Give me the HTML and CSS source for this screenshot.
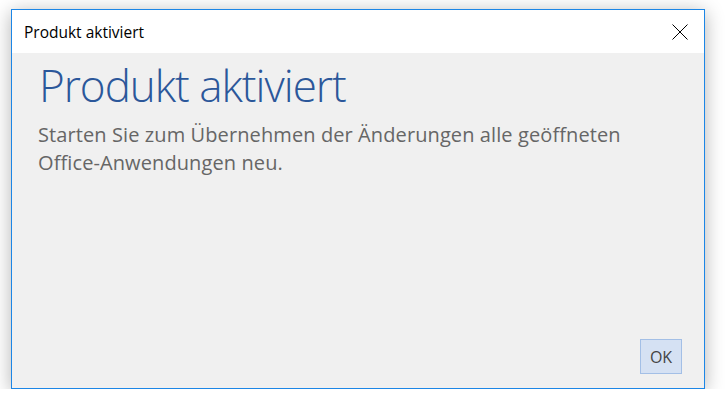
FILE: index.html
```html
<!DOCTYPE html>
<html lang="de">
<head>
    <meta charset="UTF-8">
    <title>Produkt aktiviert</title>
    <link rel="stylesheet" href="styles.css">
</head>
<body>
    <div class="dialog">
        <div class="titlebar">
            <span class="title">Produkt aktiviert</span>
            <button class="close" aria-label="Schließen">
                <svg width="16" height="16" viewBox="0 0 16 16">
                    <path d="M0.5 0.5 L15.5 15.5 M15.5 0.5 L0.5 15.5" stroke="#000" stroke-width="1" fill="none"/>
                </svg>
            </button>
        </div>
        <div class="content">
            <h1 class="heading">Produkt aktiviert</h1>
            <p class="message">Starten Sie zum Übernehmen der Änderungen alle geöffneten Office-Anwendungen neu.</p>
            <div class="actions">
                <button class="ok">OK</button>
            </div>
        </div>
    </div>
</body>
</html>
```

FILE: styles.css
```css
body {
    margin: 0;
    background: #ffffff;
    font-family: 'Open Sans', 'Noto Sans', sans-serif;
}

.dialog {
    margin: 9px 0 0 11px;
    width: 692px;
    height: 378px;
    border: 1px solid #1c86e6;
    display: flex;
    flex-direction: column;
    box-shadow: 0 3px 18px rgba(0, 0, 0, 0.3);
    background: #f0f0f0;
}

.titlebar {
    height: 43px;
    background: #ffffff;
    display: flex;
    align-items: center;
    justify-content: space-between;
    padding: 0 16px 0 12px;
}

.title {
    font-size: 15.5px;
    color: #000;
}

.close {
    border: none;
    background: none;
    padding: 0;
    width: 16px;
    height: 16px;
    display: flex;
}

.content {
    flex: 1;
    display: flex;
    flex-direction: column;
    padding: 4px 22px 14px 27px;
}

.heading {
    margin: 0;
    font-size: 44px;
    font-weight: 300;
    letter-spacing: -1px;
    color: #2b579a;
    line-height: 56px;
}

.message {
    margin: 8px 0 0 -1px;
    font-size: 20px;
    letter-spacing: 0.1px;
    line-height: 28px;
    color: #666666;
    width: 600px;
}

.actions {
    margin-top: auto;
    display: flex;
    justify-content: flex-end;
}

.ok {
    width: 42px;
    height: 35px;
    border: 1px solid #a3bfe6;
    background: #d5e1f3;
    color: #444;
    font-family: inherit;
    font-size: 16px;
    padding: 0;
}
```
